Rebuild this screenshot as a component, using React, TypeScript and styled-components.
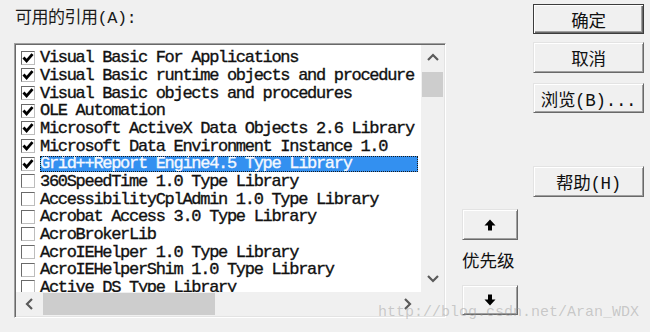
import React from "react";
import styled, { createGlobalStyle } from "styled-components";

const GlobalStyle = createGlobalStyle`
  html, body { margin: 0; padding: 0; background: #f0f0f0; }
  * { box-sizing: border-box; }
`;

const MONO = `"Liberation Mono", "Noto Sans CJK SC", monospace`;

const Dialog = styled.div`
  position: relative;
  width: 650px;
  height: 332px;
  display: flex;
  align-items: flex-start;
  padding: 4px 0 0 14px;
  background: #f0f0f0;
  font-family: ${MONO};
  color: #000;
  overflow: hidden;
`;

const LeftCol = styled.div`
  width: 432px;
  display: flex;
  flex-direction: column;
`;

const Label = styled.div`
  height: 39px;
  padding-left: 1px;
  font-size: 17px;
  line-height: 29px;
  letter-spacing: -0.5px;
  color: #1a1a1a;
`;

const ListBox = styled.div`
  height: 275px;
  border-style: solid;
  border-width: 1px;
  border-color: #a0a0a0 #ffffff #ffffff #a0a0a0;
  box-shadow: inset 1px 1px 0 #696969, inset -1px -1px 0 #e3e3e3;
  padding: 1px;
  background: #fff;
  display: grid;
  grid-template-columns: 1fr 23px;
  grid-template-rows: 1fr 24px;
`;

const Rows = styled.div`
  overflow: hidden;
  padding-top: 4px;
  display: flex;
  flex-direction: column;
`;

const Row = styled.div`
  height: 17.67px;
  flex: none;
  display: flex;
  align-items: center;
  padding-left: 5px;
  gap: 5px;
`;

const Check = styled.span`
  width: 14px;
  height: 14px;
  flex: none;
  background: #fff;
  border: 1px solid;
  border-color: #6a6a6a #bdbdbd #bdbdbd #6a6a6a;
  display: flex;
  align-items: center;
  justify-content: center;
`;

const ItemText = styled.span<{ $sel?: boolean }>`
  flex: 1;
  margin-right: 3px;
  height: 16px;
  display: flex;
  align-items: center;
  white-space: nowrap;
  font-size: 17px;
  letter-spacing: -1.3px;
  -webkit-text-stroke: 0.35px currentColor;
  color: ${(p) => (p.$sel ? "#f4f8ff" : "#111")};
  background: ${(p) => (p.$sel ? "#3390f0" : "transparent")};
  outline: ${(p) => (p.$sel ? "1px dotted #1a1a1a" : "none")};
  outline-offset: -1px;
`;

const VScroll = styled.div`
  background: #f0f0f0;
  display: flex;
  flex-direction: column;
  align-items: center;
`;

const ScrollArrow = styled.div<{ $size: number }>`
  width: 100%;
  height: ${(p) => p.$size}px;
  flex: none;
  display: flex;
  align-items: center;
  justify-content: center;
`;

const VThumb = styled.div`
  width: 21px;
  height: 25px;
  margin-top: 1px;
  background: #cdcdcd;
`;

const Spacer = styled.div`
  flex: 1;
`;

const HScroll = styled.div`
  background: #f0f0f0;
  display: flex;
  align-items: center;
`;

const HThumb = styled.div`
  width: 172px;
  height: 22px;
  background: #cdcdcd;
`;

const Corner = styled.div`
  background: #f0f0f0;
`;

const MidCol = styled.div`
  width: 56px;
  margin-left: 16px;
  padding-top: 205px;
  display: flex;
  flex-direction: column;
`;

const PriorityLabel = styled.div`
  height: 45px;
  font-size: 17.5px;
  line-height: 45px;
  color: #111;
`;

const RightCol = styled.div`
  width: 111px;
  margin-left: 15px;
  display: flex;
  flex-direction: column;
`;

const Button = styled.div<{ $default?: boolean; $mt?: number; $h?: number }>`
  height: ${(p) => p.$h ?? 30}px;
  margin-top: ${(p) => p.$mt ?? 0}px;
  background: #f0f0f0;
  display: flex;
  align-items: center;
  justify-content: center;
  font-size: 17.5px;
  letter-spacing: -0.3px;
  color: #111;
  border: 1px solid;
  border-color: ${(p) =>
    p.$default ? "#3c3c3c" : "#e3e3e3 #696969 #696969 #e3e3e3"};
  box-shadow: ${(p) =>
    p.$default
      ? "inset 1px 1px 0 #ffffff, inset -1px -1px 0 #696969, inset -2px -2px 0 #a0a0a0"
      : "inset 1px 1px 0 #ffffff, inset -1px -1px 0 #a0a0a0"};
`;

const Watermark = styled.div`
  position: absolute;
  left: 378px;
  top: 304px;
  font-family: "Liberation Mono", monospace;
  font-size: 15px;
  color: rgba(150, 150, 150, 0.45);
  white-space: nowrap;
  pointer-events: none;
`;

const CheckMark = () => (
  <svg width="12" height="12" viewBox="0 0 12 12">
    <path d="M1.5 5.5 L4.6 9 L10.5 2.2" fill="none" stroke="#000" strokeWidth="2.8" />
  </svg>
);

const Chevron = ({ dir }: { dir: "up" | "down" | "left" | "right" }) => {
  const d = {
    up: "M1 8 L6 3 L11 8",
    down: "M1 3 L6 8 L11 3",
    left: "M8 1 L3 6 L8 11",
    right: "M3 1 L8 6 L3 11",
  }[dir];
  return (
    <svg width="12" height="12" viewBox="0 0 12 12">
      <path d={d} fill="none" stroke="#5a5a5a" strokeWidth="2.2" />
    </svg>
  );
};

const Arrow = ({ down }: { down?: boolean }) => (
  <svg width="12" height="12" viewBox="0 0 12 12" style={{ transform: down ? "rotate(180deg)" : undefined }}>
    <polygon points="0.5,6.5 6,0.5 11.5,6.5 8,6.5 8,11.5 4,11.5 4,6.5" fill="#000" />
  </svg>
);

const items: { text: string; checked: boolean; selected?: boolean }[] = [
  { text: "Visual Basic For Applications", checked: true },
  { text: "Visual Basic runtime objects and procedure", checked: true },
  { text: "Visual Basic objects and procedures", checked: true },
  { text: "OLE Automation", checked: true },
  { text: "Microsoft ActiveX Data Objects 2.6 Library", checked: true },
  { text: "Microsoft Data Environment Instance 1.0", checked: true },
  { text: "Grid++Report Engine4.5 Type Library", checked: true, selected: true },
  { text: "360SpeedTime 1.0 Type Library", checked: false },
  { text: "AccessibilityCplAdmin 1.0 Type Library", checked: false },
  { text: "Acrobat Access 3.0 Type Library", checked: false },
  { text: "AcroBrokerLib", checked: false },
  { text: "AcroIEHelper 1.0 Type Library", checked: false },
  { text: "AcroIEHelperShim 1.0 Type Library", checked: false },
  { text: "Active DS Type Library", checked: false },
];

export default function App() {
  return (
    <>
      <GlobalStyle />
      <Dialog>
        <LeftCol>
          <Label>可用的引用(A):</Label>
          <ListBox>
            <Rows>
              {items.map((it) => (
                <Row key={it.text}>
                  <Check>{it.checked && <CheckMark />}</Check>
                  <ItemText $sel={it.selected}>{it.text}</ItemText>
                </Row>
              ))}
            </Rows>
            <VScroll>
              <ScrollArrow $size={26}>
                <Chevron dir="up" />
              </ScrollArrow>
              <VThumb />
              <Spacer />
              <ScrollArrow $size={26}>
                <Chevron dir="down" />
              </ScrollArrow>
            </VScroll>
            <HScroll>
              <ScrollArrow $size={24} style={{ width: 27 }}>
                <Chevron dir="left" />
              </ScrollArrow>
              <HThumb />
              <Spacer />
              <ScrollArrow $size={24} style={{ width: 26 }}>
                <Chevron dir="right" />
              </ScrollArrow>
            </HScroll>
            <Corner />
          </ListBox>
        </LeftCol>
        <MidCol>
          <Button $h={31}>
            <Arrow />
          </Button>
          <PriorityLabel>优先级</PriorityLabel>
          <Button $h={30}>
            <Arrow down />
          </Button>
        </MidCol>
        <RightCol>
          <Button $default>确定</Button>
          <Button $mt={8} $h={31}>取消</Button>
          <Button $mt={10}>浏览(B)...</Button>
          <Button $mt={53} $h={31}>帮助(H)</Button>
        </RightCol>
        <Watermark>http://blog.csdn.net/Aran_WDX</Watermark>
      </Dialog>
    </>
  );
}
